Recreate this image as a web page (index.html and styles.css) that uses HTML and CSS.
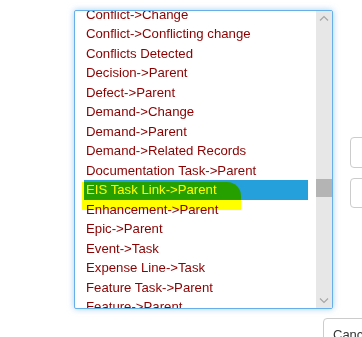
FILE: index.html
```html
<!DOCTYPE html>
<html lang="en">
<head>
  <meta charset="UTF-8">
  <title>Relationship picker</title>
  <link rel="stylesheet" href="styles.css">
</head>
<body>
  <div class="wrap">
    <div class="row">
      <div class="listbox">
        <div class="options">
          <div class="options-inner">
            <div class="opt">Conflict-&gt;Change</div>
            <div class="opt">Conflict-&gt;Conflicting change</div>
            <div class="opt">Conflicts Detected</div>
            <div class="opt">Decision-&gt;Parent</div>
            <div class="opt">Defect-&gt;Parent</div>
            <div class="opt">Demand-&gt;Change</div>
            <div class="opt">Demand-&gt;Parent</div>
            <div class="opt">Demand-&gt;Related Records</div>
            <div class="opt">Documentation Task-&gt;Parent</div>
            <div class="opt selected">EIS Task Link-&gt;Parent<span class="marker"></span></div>
            <div class="opt">Enhancement-&gt;Parent</div>
            <div class="opt">Epic-&gt;Parent</div>
            <div class="opt">Event-&gt;Task</div>
            <div class="opt">Expense Line-&gt;Task</div>
            <div class="opt">Feature Task-&gt;Parent</div>
            <div class="opt">Feature-&gt;Parent</div>
          </div>
        </div>
        <div class="scrollbar">
          <svg class="arrow" width="16" height="14" viewBox="0 0 16 14"><path d="M4 9.5 L8 5.5 L12 9.5" fill="none" stroke="#a6a6a6" stroke-width="1.2"/></svg>
          <div class="track"><div class="thumb"></div></div>
          <svg class="arrow" width="16" height="14" viewBox="0 0 16 14"><path d="M4 4.5 L8 8.5 L12 4.5" fill="none" stroke="#a6a6a6" stroke-width="1.2"/></svg>
        </div>
      </div>
      <div class="side">
        <button class="btn tall"></button>
        <button class="btn"></button>
      </div>
    </div>
    <div class="footer">
      <button class="btn cancel">Cancel</button>
    </div>
  </div>
</body>
</html>
```

FILE: styles.css
```css
html, body { margin:0; padding:0; background:#fff; overflow:hidden; }
body { font-family:"Liberation Sans", Arial, sans-serif; font-size:13px; color:#333; width:362px; height:337px; }
.wrap { padding:10px 0 0 74px; }
.row { display:flex; align-items:flex-start; }
.listbox { width:259px; height:299px; box-sizing:border-box; border:1px solid #66afe9; border-radius:2px; box-shadow:0 0 6px rgba(102,175,233,.6); display:flex; flex:none; background:#fff; }
.options { flex:1; overflow:hidden; padding:0 8px 0 9px; }
.options-inner { margin-top:-6.5px; }
.opt { font-size:13.2px; line-height:19.5px; height:19.5px; padding-left:2px; color:#8b0000; white-space:nowrap; position:relative; }
.opt.selected { background:#26a0da; color:#ffff00; }
.marker { position:absolute; left:-2px; top:2px; width:159px; height:28px; background:#ffff00; border-radius:0 14px 0 0; mix-blend-mode:multiply; }
.scrollbar { width:16px; background:#e7e7e7; display:flex; flex-direction:column; }
.arrow { display:block; flex:none; }
.track { flex:1; padding-top:154px; }
.thumb { height:18px; background:#b4b4b4; }
.side { display:flex; flex-direction:column; gap:10px; margin-left:17px; padding-top:127px; }
.btn { font-family:inherit; font-size:13px; color:#333; background:#fff; border:1px solid #ccc; border-radius:4px; padding:6px 12px; line-height:20px; }
.side .btn { width:60px; height:30px; }
.side .btn.tall { height:31px; }
.footer { padding:9px 0 0 249px; }
.cancel { width:80px; text-align:left; padding-left:9px; }
```
